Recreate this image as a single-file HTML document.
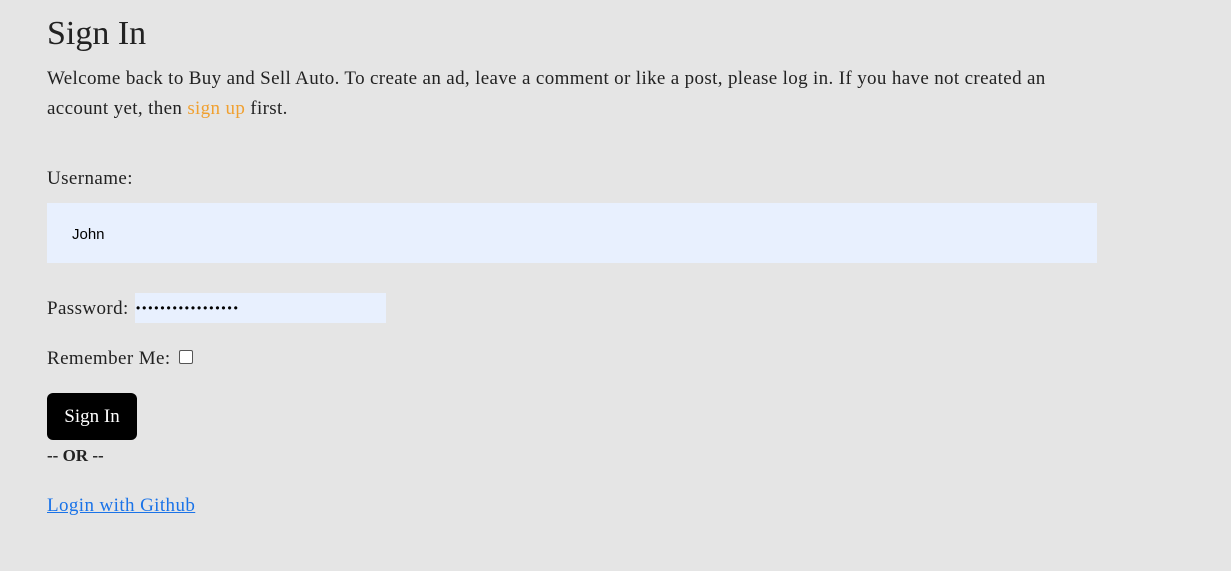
<!DOCTYPE html>
<html><head><meta charset="utf-8"><style>
body{margin:0;background:#e5e5e5;width:1231px;height:571px;overflow:hidden;font-family:"Liberation Serif",serif;color:#222;}
.a{position:absolute;white-space:nowrap;}
h1{position:absolute;left:47px;top:13px;margin:0;font-weight:normal;font-size:34px;line-height:42px;}
p{position:absolute;left:47px;top:64px;margin:0;font-size:19px;line-height:30px;width:1040px;letter-spacing:0.35px;}
.t{font-size:19px;line-height:24px;letter-spacing:0.4px;}
</style></head><body>
<h1>Sign In</h1>
<p>Welcome back to Buy and Sell Auto. To create an ad, leave a comment or like a post, please log in. If you have not created an account yet, then <span style="color:#f0a030">sign up</span> first.</p>
<div class="a t" style="left:47px;top:167px">Username:</div>
<div class="a" style="left:47px;top:203px;width:1050px;height:60px;background:#e8f0fe"></div>
<div class="a" style="left:72px;top:226px;font-family:'Liberation Sans',sans-serif;font-size:15px;color:#000">John</div>
<div class="a t" style="left:47px;top:297px">Password:</div>
<div class="a" style="left:135px;top:293px;width:251px;height:30px;background:#e8f0fe"></div>
<div class="a" style="left:136px;top:300px;font-family:'Liberation Sans',sans-serif;font-size:12px;line-height:16px;color:#000;letter-spacing:1.9px">•••••••••••••••••</div>
<div class="a t" style="left:47px;top:347px">Remember Me:</div>
<div class="a" style="left:179px;top:350px;width:12px;height:12px;border:1px solid #555;border-radius:2px;background:#fff"></div>
<div class="a" style="left:47px;top:393px;width:90px;height:47px;background:#000;border-radius:6px;color:#fff;font-size:19px;line-height:48px;text-align:center">Sign In</div>
<div class="a" style="left:47px;top:446px;font-size:17px;font-weight:bold">-- OR --</div>
<div class="a t" style="left:47px;top:494px;color:#1a73e8;text-decoration:underline">Login with Github</div>
</body></html>
